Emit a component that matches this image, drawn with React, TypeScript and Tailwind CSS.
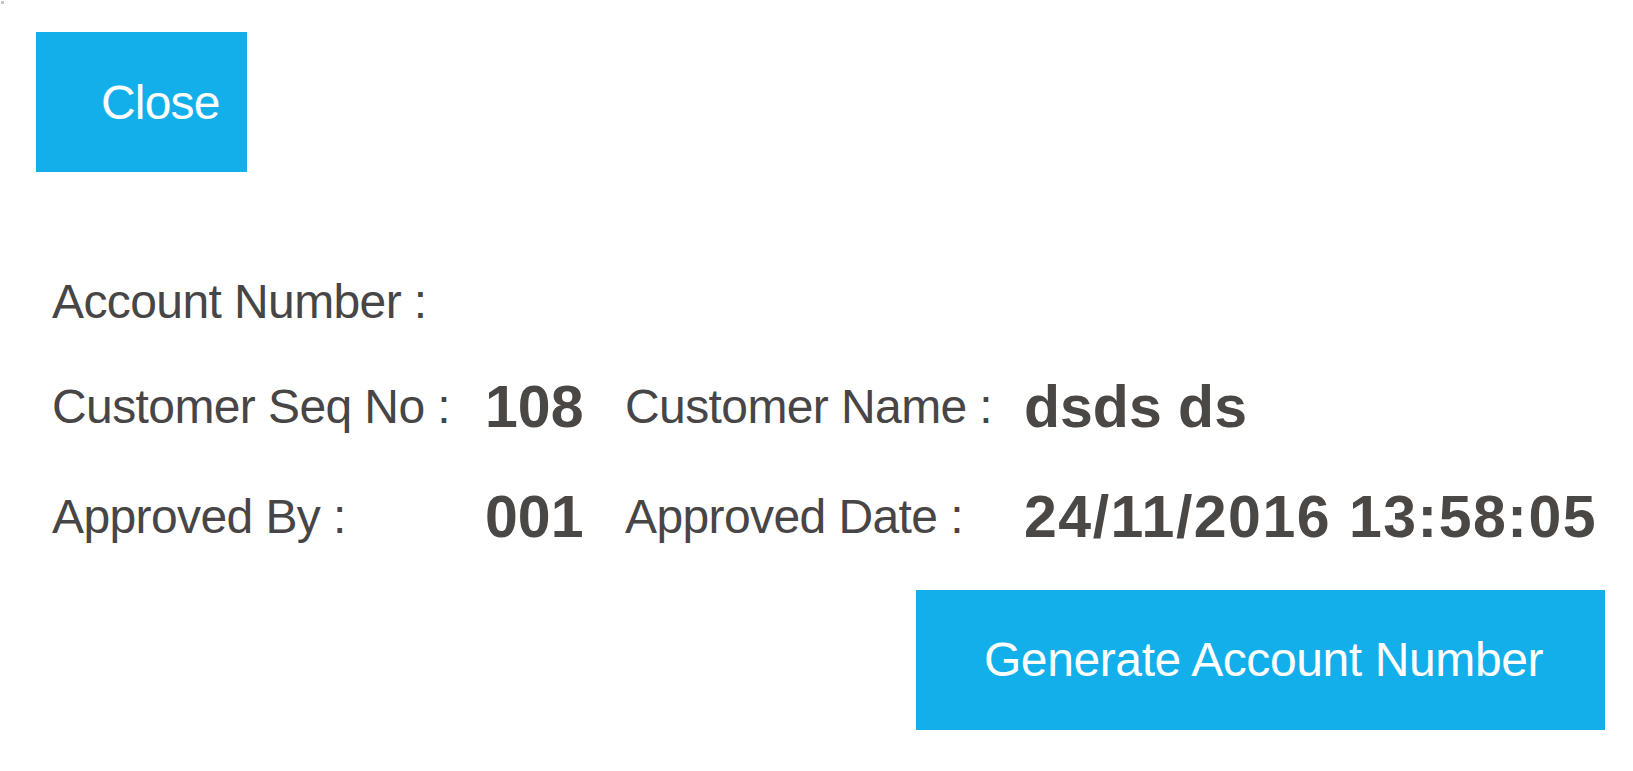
import React from 'react'

const font = { fontFamily: '"Liberation Sans", Arial, sans-serif' }

function Label({ children }: { children: React.ReactNode }) {
  return <span className="text-[48px] leading-none tracking-[-0.6px] text-[#474545] whitespace-nowrap">{children}</span>
}

function Value({ children, wide }: { children: React.ReactNode; wide?: boolean }) {
  return (
    <span className={`text-[59px] leading-none font-bold text-[#4a4744] whitespace-nowrap ${wide ? 'tracking-[1.5px]' : ''}`}>
      {children}
    </span>
  )
}

export default function App() {
  return (
    <div className="relative min-h-[771px] w-[1633px] bg-white" style={font}>
      <span className="absolute left-[1px] top-[1px] h-[3px] w-[3px] bg-[#c8c8c8]" />
      <div className="pt-[32px] pl-[36px] w-[1605px]">
        <button className="flex h-[140px] w-[211px] items-center bg-[#13afea] pl-[65px] pt-[2px] text-[48px] leading-none tracking-[-0.8px] text-white">
          Close
        </button>

        <div className="pl-[16px]">
          <div className="mt-[100px] flex h-[60px] items-center">
            <Label>Account Number :</Label>
          </div>

          <div className="mt-[45px] grid h-[60px] grid-cols-[433px_140px_399px_auto] items-center">
            <Label>Customer Seq No :</Label>
            <Value>108</Value>
            <Label>Customer Name :</Label>
            <Value>dsds ds</Value>
          </div>

          <div className="mt-[50px] grid h-[60px] grid-cols-[433px_140px_399px_auto] items-center">
            <Label>Approved By :</Label>
            <Value>001</Value>
            <Label>Approved Date :</Label>
            <Value wide>24/11/2016 13:58:05</Value>
          </div>
        </div>

        <div className="mt-[43px] flex justify-end">
          <button className="flex h-[140px] w-[689px] items-center justify-center bg-[#13afea] pl-[6px] text-[48px] leading-none tracking-[-0.4px] text-white">
            Generate Account Number
          </button>
        </div>
      </div>
    </div>
  )
}
